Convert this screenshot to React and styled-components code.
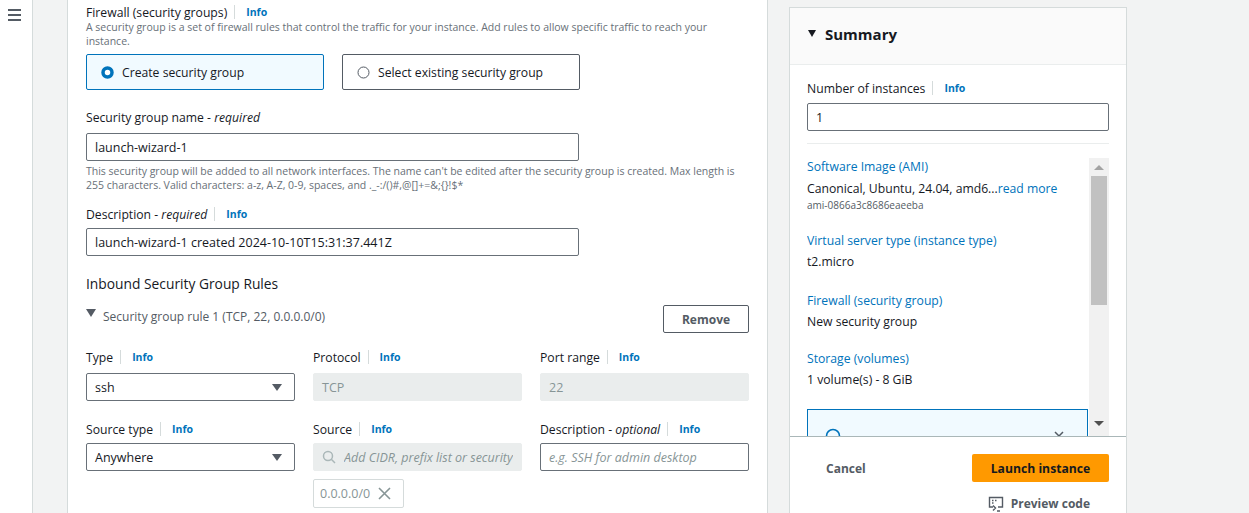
import React from "react";
import styled, { createGlobalStyle } from "styled-components";

const GlobalStyle = createGlobalStyle`
  html, body {
    margin: 0;
    padding: 0;
    background: #f2f3f3;
    font-family: "Open Sans", "Noto Sans", sans-serif;
    color: #16191f;
  }
  * { box-sizing: border-box; }
`;

const Page = styled.div`
  display: flex;
  height: 513px;
  overflow: hidden;
  background: #f2f3f3;
`;

const NavRail = styled.div`
  width: 33px;
  flex: none;
  background: #fff;
  border-right: 1px solid #d5dbdb;
  padding: 9px 0 0 8px;
`;

const Burger = styled.div`
  display: flex;
  flex-direction: column;
  gap: 3.5px;
  width: 13px;
  span {
    display: block;
    height: 1.5px;
    background: #545b64;
  }
`;

const MainPanel = styled.main`
  width: 701px;
  flex: none;
  margin-left: 34px;
  background: #fff;
  border-left: 1px solid #d5dbdb;
  border-right: 1px solid #d5dbdb;
  padding: 3px 18px 0 18px;
  display: flex;
  flex-direction: column;
`;

const LabelRow = styled.div`
  display: flex;
  align-items: center;
  height: 18px;
  font-size: 12.2px;
  color: #16191f;
  margin-top: ${(p) => p.$mt || 0}px;
  em { font-style: italic; }
`;

const Sep = styled.span`
  width: 1px;
  height: 14px;
  background: #d5dbdb;
  margin: 0 11px 0 7px;
`;

const InfoLink = styled.span`
  font-size: 10.5px;
  font-weight: 700;
  color: #0073bb;
`;

const Hint = styled.div`
  font-size: 10.5px;
  line-height: 13.5px;
  color: #687078;
  margin-top: ${(p) => p.$mt || 0}px;
`;

const TileRow = styled.div`
  display: flex;
  gap: 18px;
  margin-top: 6px;
`;

const Tile = styled.div`
  width: 238px;
  height: 36px;
  display: flex;
  align-items: center;
  gap: 8px;
  padding-left: 14px;
  border: 1px solid ${(p) => (p.$on ? "#0073bb" : "#545b64")};
  background: ${(p) => (p.$on ? "#f1faff" : "#fff")};
  border-radius: 2px;
  font-size: 12.2px;
`;

const TextInput = styled.div`
  width: ${(p) => p.$w || "100%"};
  height: 28px;
  display: flex;
  align-items: center;
  gap: 8px;
  padding: 0 8px;
  margin-top: ${(p) => p.$mt ?? 6}px;
  border: 1px solid ${(p) => (p.$disabled ? "#eaeded" : "#687078")};
  background: ${(p) => (p.$disabled ? "#eaeded" : "#fff")};
  color: ${(p) => (p.$disabled ? "#879596" : "#16191f")};
  border-radius: 2px;
  font-size: 12.5px;
  white-space: nowrap;
  overflow: hidden;
`;

const Placeholder = styled.span`
  font-style: italic;
  color: #879596;
  flex: 1;
  overflow: hidden;
`;

const Caret = styled.span`
  margin-left: auto;
  margin-right: 4px;
  width: 0;
  height: 0;
  border-left: 5px solid transparent;
  border-right: 5px solid transparent;
  border-top: 7px solid #545b64;
`;

const SectionHeading = styled.h3`
  margin: 18px 0 0;
  font-size: 13.8px;
  font-weight: 400;
  line-height: 20px;
`;

const RuleRow = styled.div`
  display: flex;
  justify-content: space-between;
  align-items: flex-start;
  margin-top: 11px;
`;

const RuleToggle = styled.div`
  display: flex;
  align-items: flex-start;
  gap: 7px;
  font-size: 12px;
  color: #545b64;
  padding-top: 3px;
`;

const ToggleTri = styled.span`
  width: 0;
  height: 0;
  margin-top: 1px;
  border-left: 5px solid transparent;
  border-right: 5px solid transparent;
  border-top: 8px solid #545b64;
`;

const OutlineButton = styled.button`
  width: 86px;
  height: 28px;
  border: 1px solid #545b64;
  border-radius: 2px;
  background: #fff;
  color: #545b64;
  font: 700 12px "Open Sans", "Noto Sans", sans-serif;
`;

const FieldGrid = styled.div`
  display: grid;
  grid-template-columns: repeat(3, 209px);
  column-gap: 18px;
  margin-top: ${(p) => p.$mt || 0}px;
`;

const Field = styled.div`
  display: flex;
  flex-direction: column;
`;

const Token = styled.div`
  width: 91px;
  height: 29px;
  margin-top: 8px;
  display: flex;
  align-items: center;
  gap: 8px;
  padding-left: 6px;
  border: 1px solid #d5dbdb;
  border-radius: 2px;
  color: #879596;
  font-size: 12.5px;
`;

const Summary = styled.aside`
  width: 338px;
  flex: none;
  margin: 7px 0 0 21px;
  background: #fff;
  border: 1px solid #d5dbdb;
  border-bottom: none;
  display: flex;
  flex-direction: column;
`;

const SummaryHead = styled.div`
  height: 57px;
  display: flex;
  align-items: center;
  gap: 9px;
  padding: 0 0 5px 18px;
  background: #fafafa;
  border-bottom: 1px solid #eaeded;
  font-size: 15px;
  font-weight: 700;
`;

const HeadTri = styled.span`
  width: 0;
  height: 0;
  border-left: 4.5px solid transparent;
  border-right: 4.5px solid transparent;
  border-top: 7px solid #16191f;
`;

const SummaryBody = styled.div`
  padding: 14px 17px 0 17px;
`;

const Divider = styled.div`
  height: 1px;
  background: #eaeded;
  margin-top: 12px;
`;

const ScrollArea = styled.div`
  display: flex;
  height: 278px;
  margin-top: 14px;
`;

const ScrollContent = styled.div`
  flex: 1;
  overflow: hidden;
`;

const SumLabel = styled.div`
  font-size: 12.2px;
  line-height: 18px;
  color: #0073bb;
  margin-top: ${(p) => p.$mt || 0}px;
`;

const SumValue = styled.div`
  font-size: 12.2px;
  line-height: 18px;
  margin-top: 3.5px;
  a { color: #0073bb; text-decoration: none; }
`;

const SumMeta = styled.div`
  font-size: 10px;
  line-height: 14px;
  color: #545b64;
`;

const Alert = styled.div`
  margin: 19.5px 1px 0 0;
  height: 40px;
  border: 1px solid #0073bb;
  background: #f1faff;
  display: flex;
  align-items: flex-start;
  justify-content: space-between;
  padding: 18px 22px 0 17px;
`;

const ScrollBar = styled.div`
  width: 20px;
  flex: none;
  background: #f1f1f1;
  display: flex;
  flex-direction: column;
  align-items: center;
`;

const ArrowUp = styled.span`
  margin: 7px 0 6px;
  width: 0;
  height: 0;
  border-left: 5px solid transparent;
  border-right: 5px solid transparent;
  border-bottom: 5px solid #a3a3a3;
`;

const ArrowDown = styled.span`
  margin-top: auto;
  margin-bottom: 10px;
  width: 0;
  height: 0;
  border-left: 5px solid transparent;
  border-right: 5px solid transparent;
  border-top: 5px solid #505050;
`;

const Thumb = styled.div`
  width: 16px;
  height: 129px;
  background: #c1c1c1;
`;

const Footer = styled.div`
  border-top: 1px solid #aab7b8;
  padding: 17px 17px 0 36px;
  display: flex;
  flex-direction: column;
`;

const FooterRow = styled.div`
  display: flex;
  align-items: center;
  justify-content: space-between;
`;

const GhostButton = styled.span`
  font-size: 12px;
  font-weight: 700;
  color: #545b64;
`;

const PrimaryButton = styled.button`
  width: 137px;
  height: 28px;
  border: none;
  border-radius: 2px;
  background: #ff9900;
  color: #16191f;
  font: 700 12.2px "Open Sans", "Noto Sans", sans-serif;
`;

const PreviewLink = styled.div`
  align-self: flex-end;
  margin: 13px 19px 0 0;
  display: flex;
  align-items: center;
  gap: 7px;
  font-size: 12px;
  font-weight: 700;
  color: #545b64;
`;

function Label({ children, info, mt }) {
  return (
    <LabelRow $mt={mt}>
      {children}
      {info && (
        <>
          <Sep />
          <InfoLink>Info</InfoLink>
        </>
      )}
    </LabelRow>
  );
}

function Radio({ on }) {
  return (
    <svg width="13" height="13" viewBox="0 0 13 13">
      {on ? (
        <circle cx="6.5" cy="6.5" r="4.5" fill="#fff" stroke="#0073bb" strokeWidth="3.5" />
      ) : (
        <circle cx="6.5" cy="6.5" r="5.5" fill="#fff" stroke="#545b64" strokeWidth="1" />
      )}
    </svg>
  );
}

function SearchIcon() {
  return (
    <svg width="14" height="14" viewBox="0 0 14 14" fill="none" stroke="#aab7b8" strokeWidth="1.5">
      <circle cx="6" cy="6" r="4.5" />
      <path d="M9.3 9.3 13 13" />
    </svg>
  );
}

function CloseIcon() {
  return (
    <svg width="13" height="13" viewBox="0 0 13 13" fill="none" stroke="#879596" strokeWidth="1.6">
      <path d="M1 1l11 11M12 1 1 12" />
    </svg>
  );
}

function PreviewIcon() {
  return (
    <svg width="16" height="16" viewBox="0 0 16 16" fill="none" stroke="#545b64" strokeWidth="1.4">
      <path d="M5 11H1.5V1.5h13V11H10" />
      <path d="M4 4.5h1.5M7 4.5h1.5M4 7h1.5" />
      <path d="M5 9.5l2.5 2.5L5 14.5M9 15h3" />
    </svg>
  );
}

export default function App() {
  return (
    <>
      <GlobalStyle />
      <Page>
        <NavRail>
          <Burger>
            <span />
            <span />
            <span />
          </Burger>
        </NavRail>

        <MainPanel>
          <Label info>Firewall (security groups)</Label>
          <Hint>
            A security group is a set of firewall rules that control the traffic for your instance. Add rules to allow specific traffic to reach your
            <br />
            instance.
          </Hint>
          <TileRow>
            <Tile $on>
              <Radio on />
              Create security group
            </Tile>
            <Tile>
              <Radio />
              Select existing security group
            </Tile>
          </TileRow>

          <Label mt={18}>
            Security group name -&nbsp;<em>required</em>
          </Label>
          <TextInput $w="493px" $mt={7}>launch-wizard-1</TextInput>
          <Hint $mt={4}>
            This security group will be added to all network interfaces. The name can't be edited after the security group is created. Max length is
            <br />
            255 characters. Valid characters: a-z, A-Z, 0-9, spaces, and ._-:/()#,@[]+=&amp;;{"{}"}!$*
          </Hint>

          <Label info mt={13}>
            Description -&nbsp;<em>required</em>
          </Label>
          <TextInput $w="493px" $mt={5}>launch-wizard-1 created 2024-10-10T15:31:37.441Z</TextInput>

          <SectionHeading>Inbound Security Group Rules</SectionHeading>
          <RuleRow>
            <RuleToggle>
              <ToggleTri />
              Security group rule 1 (TCP, 22, 0.0.0.0/0)
            </RuleToggle>
            <OutlineButton>Remove</OutlineButton>
          </RuleRow>

          <FieldGrid $mt={15}>
            <Field>
              <Label info>Type</Label>
              <TextInput $mt={7}>
                ssh
                <Caret />
              </TextInput>
            </Field>
            <Field>
              <Label info>Protocol</Label>
              <TextInput $mt={7} $disabled>TCP</TextInput>
            </Field>
            <Field>
              <Label info>Port range</Label>
              <TextInput $mt={7} $disabled>22</TextInput>
            </Field>
          </FieldGrid>

          <FieldGrid $mt={19}>
            <Field>
              <Label info>Source type</Label>
              <TextInput $mt={5}>
                Anywhere
                <Caret />
              </TextInput>
            </Field>
            <Field>
              <Label info>Source</Label>
              <TextInput $mt={5} $disabled>
                <SearchIcon />
                <Placeholder>Add CIDR, prefix list or security</Placeholder>
              </TextInput>
              <Token>
                0.0.0.0/0
                <CloseIcon />
              </Token>
            </Field>
            <Field>
              <Label info>
                Description -&nbsp;<em>optional</em>
              </Label>
              <TextInput $mt={5}>
                <Placeholder>e.g. SSH for admin desktop</Placeholder>
              </TextInput>
            </Field>
          </FieldGrid>
        </MainPanel>

        <Summary>
          <SummaryHead>
            <HeadTri />
            Summary
          </SummaryHead>
          <SummaryBody>
            <Label info>Number of instances</Label>
            <TextInput $mt={6}>1</TextInput>
            <Divider />
            <ScrollArea>
              <ScrollContent>
                <SumLabel>Software Image (AMI)</SumLabel>
                <SumValue>
                  Canonical, Ubuntu, 24.04, amd6...<a>read more</a>
                </SumValue>
                <SumMeta>ami-0866a3c8686eaeeba</SumMeta>
                <SumLabel $mt={20}>Virtual server type (instance type)</SumLabel>
                <SumValue>t2.micro</SumValue>
                <SumLabel $mt={20.5}>Firewall (security group)</SumLabel>
                <SumValue>New security group</SumValue>
                <SumLabel $mt={18.5}>Storage (volumes)</SumLabel>
                <SumValue>1 volume(s) - 8 GiB</SumValue>
                <Alert>
                  <svg width="16" height="16" viewBox="0 0 16 16" fill="none" stroke="#0073bb" strokeWidth="1.6">
                    <circle cx="8" cy="8" r="6.5" />
                  </svg>
                  <svg width="12" height="12" viewBox="0 0 12 12" fill="none" stroke="#545b64" strokeWidth="1.5">
                    <path d="M2 4l4 4 4-4" />
                  </svg>
                </Alert>
              </ScrollContent>
              <ScrollBar>
                <ArrowUp />
                <Thumb />
                <ArrowDown />
              </ScrollBar>
            </ScrollArea>
          </SummaryBody>
          <Footer>
            <FooterRow>
              <GhostButton>Cancel</GhostButton>
              <PrimaryButton>Launch instance</PrimaryButton>
            </FooterRow>
            <PreviewLink>
              <PreviewIcon />
              Preview code
            </PreviewLink>
          </Footer>
        </Summary>
      </Page>
    </>
  );
}
